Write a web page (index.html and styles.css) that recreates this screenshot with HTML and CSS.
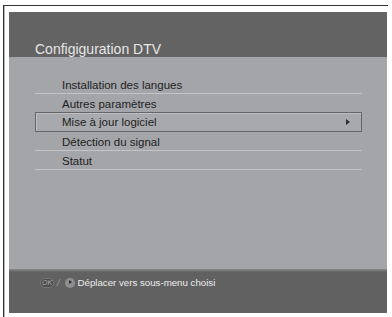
FILE: index.html
```html
<!DOCTYPE html>
<html lang="fr">

<head>
    <meta charset="UTF-8">
    <title>Configiguration DTV</title>
    <link rel="stylesheet" href="styles.css">
</head>

<body>
    <div class="frame">
        <div class="osd">
            <div class="osd-header">
                <h1 class="osd-title">Configiguration DTV</h1>
            </div>
            <div class="osd-body">
                <ul class="menu">
                    <li class="menu-item">Installation des langues</li>
                    <li class="menu-item">Autres paramètres</li>
                    <li class="menu-item selected">
                        <span>Mise à jour logiciel</span>
                        <span class="arrow"></span>
                    </li>
                    <li class="menu-item">Détection du signal</li>
                    <li class="menu-item">Statut</li>
                </ul>
            </div>
            <div class="osd-footer">
                <span class="key-ok">OK</span>
                <span class="slash">/</span>
                <span class="key-right"></span>
                <span class="hint">Déplacer vers sous-menu choisi</span>
            </div>
        </div>
    </div>
</body>

</html>
```

FILE: styles.css
```css
html,
body {
    margin: 0;
    padding: 0;
    background-color: #fff;
    font-family: "Liberation Sans", Arial, sans-serif;
}

* {
    box-sizing: border-box;
}

.frame {
    width: 385px;
    height: 312px;
    margin: 5px 0 0 3px;
    padding: 6px 0 0 5px;
    border-top: 1px solid #333;
    border-left: 1px solid #333;
    box-shadow: inset 1px 0 0 #b5b5b5;
}

.osd {
    display: flex;
    flex-direction: column;
    width: 378px;
    height: 301px;
    background-color: #a4a5a9;
}

/* HEADER */
.osd-header {
    display: flex;
    align-items: flex-end;
    height: 45px;
    padding-left: 26px;
    background-color: #636363;
}

.osd-title {
    margin: 0;
    font-size: 14px;
    font-weight: normal;
    line-height: 16px;
    color: #e6e6e6;
}

/* MENU */
.osd-body {
    flex: 1;
    padding-top: 18px;
}

.menu {
    width: 327px;
    margin: 0 0 0 26px;
    padding: 0;
    list-style: none;
}

.menu-item {
    height: 19px;
    padding: 3px 0 0 27px;
    border-bottom: 1px solid #c3c4c6;
    font-size: 11.5px;
    line-height: 15px;
    color: #1e1e1e;
}

.menu-item.selected {
    display: flex;
    justify-content: space-between;
    align-items: center;
    height: 20px;
    margin-top: -1px;
    padding: 0 11px 0 26px;
    border: 1px solid #66666a;
    box-shadow: inset 1px 1px 0 #bdbec0;
    background-color: #a8a9ad;
}

.arrow {
    width: 0;
    height: 0;
    border-left: 4px solid #2e2e2e;
    border-top: 3px solid transparent;
    border-bottom: 3px solid transparent;
}

/* FOOTER */
.osd-footer {
    display: flex;
    align-items: center;
    height: 44px;
    padding: 8px 0 25px 31px;
    background: linear-gradient(#8c8c8e, #616161 3px);
}

.key-ok {
    width: 14px;
    height: 10px;
    border: 1px solid #777;
    border-radius: 5px;
    background-color: #4d4d4d;
    font-size: 7px;
    font-style: italic;
    line-height: 8px;
    text-align: center;
    color: #b0b0b0;
}

.slash {
    margin: 0 5px 0 3px;
    font-size: 9px;
    font-style: italic;
    color: #a0a0a0;
}

.key-right {
    position: relative;
    width: 10px;
    height: 10px;
    border-radius: 50%;
    background-color: #8e8e8e;
}

.key-right::after {
    content: "";
    position: absolute;
    left: 4px;
    top: 2.5px;
    border-left: 3px solid #2a2a2a;
    border-top: 2.5px solid transparent;
    border-bottom: 2.5px solid transparent;
}

.hint {
    margin-left: 3px;
    font-size: 9.7px;
    color: #ececec;
}
```
